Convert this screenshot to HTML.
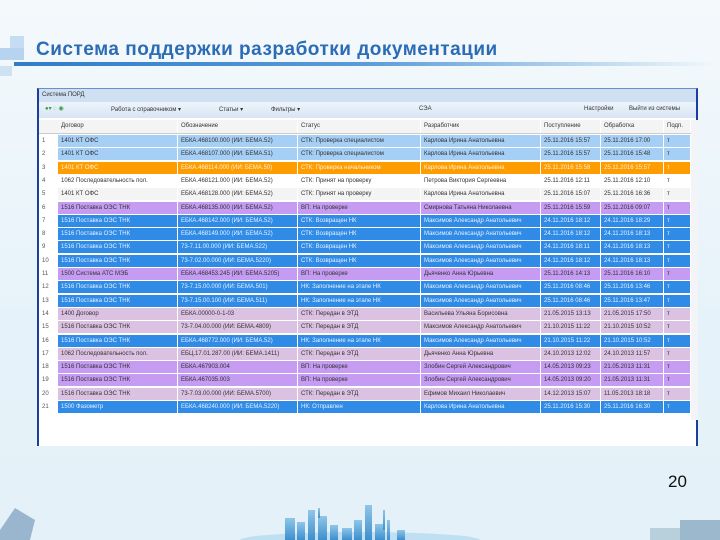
<!DOCTYPE html>
<html><head><meta charset="utf-8"><style>
*{margin:0;padding:0;box-sizing:border-box}
body{width:720px;height:540px;overflow:hidden;position:relative;background:linear-gradient(#f4f9fc,#e6f2f9 60%,#e4f1f8);font-family:"Liberation Sans",sans-serif}
.t{position:absolute;left:36px;top:39px;font-size:19px;font-weight:bold;color:#2b6cb5;letter-spacing:0.5px}
.line{position:absolute;left:14px;top:62px;width:700px;height:4px;background:linear-gradient(90deg,#2f7cc8,#5a9bd8 50%,rgba(200,225,245,0))}
.sq{position:absolute}
.win{position:absolute;left:37px;top:88px;width:661px;height:358px;background:#fff;border-left:2px solid #1b3f9c;border-right:2px solid #1b3f9c;border-top:1px solid #6b8fc8}
.tb{position:absolute;left:0;top:0;width:100%;height:13px;background:#cfe0f3;font-size:6px;color:#333;padding:3px 3px}
.tool{position:absolute;left:0;top:13px;width:100%;height:16px;background:linear-gradient(#eef4fb,#d7e5f4);font-size:6px;color:#333}
.hd{position:absolute;left:0;top:31px;width:652px;height:14px;background:#f4f4f4;border-bottom:1px solid #ccc;font-size:6px;color:#333}
.hd div,.r div{position:absolute;top:0;height:100%;white-space:nowrap;overflow:hidden;padding:3px 3px;border-right:1px solid #fff}
.r{position:absolute;left:0;width:652px;height:12px;font-size:6px;color:#333}
.r div:nth-child(1){left:0;width:17px;background:#fff!important;color:#555}
.r div:nth-child(2),.hd div:nth-child(1){left:19px;width:120px}
.r div:nth-child(3),.hd div:nth-child(2){left:139px;width:120px}
.r div:nth-child(4),.hd div:nth-child(3){left:259px;width:123px}
.r div:nth-child(5),.hd div:nth-child(4){left:382px;width:120px}
.r div:nth-child(6),.hd div:nth-child(5){left:502px;width:60px}
.r div:nth-child(7),.hd div:nth-child(6){left:562px;width:63px}
.r div:nth-child(8),.hd div:nth-child(7){left:625px;width:27px}
.lb div{background:#a6cff6}.or div{background:#ff9c00;color:#fff3e0}.w div{background:#fff}.g div{background:#f4f4f4}
.p div{background:#c59cf2}.b div{background:#2f8be6;color:#e6f0ff}.k div{background:#dcc2e2}
.sb{position:absolute;left:652px;top:31px;width:7px;height:300px;background:#f3f4f7}
.num{position:absolute;left:668px;top:472px;font-size:17px;color:#111}
</style></head><body>
<div class="sq" style="left:10px;top:36px;width:14px;height:12px;background:#c5dcf2"></div>
<div class="sq" style="left:0;top:48px;width:24px;height:12px;background:#b6d3ef"></div>
<div class="sq" style="left:0;top:66px;width:12px;height:10px;background:#cfe2f4"></div>
<div class="t">Система поддержки разработки документации</div>
<div class="line"></div>
<div class="win">
<div class="tb">Система ПОРД</div>
<div class="tool"><span style="position:absolute;left:6px;top:3px;color:#3a9a3a">●▾ ◌ ◉</span><span style="position:absolute;left:72px;top:4px">Работа с справочником ▾</span><span style="position:absolute;left:180px;top:4px">Статьи ▾</span><span style="position:absolute;left:232px;top:4px">Фильтры ▾</span><span style="position:absolute;left:380px;top:4px">СЭА</span><span style="position:absolute;left:545px;top:4px">Настройки</span><span style="position:absolute;left:590px;top:4px">Выйти из системы</span></div>
<div class="hd"><div>Договор</div><div>Обозначение</div><div>Статус</div><div>Разработчик</div><div>Поступление</div><div>Обработка</div><div>Подп.</div></div>
<div class="sb"></div>
<div class="r lb" style="top:46px"><div>1</div><div>1401 КТ ОФС</div><div>ЕБКА.468100.000 (ИИ: БЕМА.52)</div><div>СТК: Проверка специалистом</div><div>Карлова Ирина Анатольевна</div><div>25.11.2016 15:57</div><div>25.11.2016 17:00</div><div>т</div></div>
<div class="r lb" style="top:59px"><div>2</div><div>1401 КТ ОФС</div><div>ЕБКА.468107.000 (ИИ: БЕМА.51)</div><div>СТК: Проверка специалистом</div><div>Карлова Ирина Анатольевна</div><div>25.11.2016 15:57</div><div>25.11.2016 15:48</div><div>т</div></div>
<div class="r or" style="top:73px"><div>3</div><div>1401 КТ ОФС</div><div>ЕБКА.468114.000 (ИИ: БЕМА.50)</div><div>СТК: Проверка начальником</div><div>Карлова Ирина Анатольевна</div><div>25.11.2016 15:58</div><div>25.11.2016 15:57</div><div>т</div></div>
<div class="r w" style="top:86px"><div>4</div><div>1062 Последовательность пол.</div><div>ЕБКА.468121.000 (ИИ: БЕМА.52)</div><div>СТК: Принят на проверку</div><div>Петрова Виктория Сергеевна</div><div>25.11.2016 12:11</div><div>25.11.2016 12:10</div><div>т</div></div>
<div class="r g" style="top:99px"><div>5</div><div>1401 КТ ОФС</div><div>ЕБКА.468128.000 (ИИ: БЕМА.52)</div><div>СТК: Принят на проверку</div><div>Карлова Ирина Анатольевна</div><div>25.11.2016 15:07</div><div>25.11.2016 16:36</div><div>т</div></div>
<div class="r p" style="top:113px"><div>6</div><div>1516 Поставка ОЭС ТНК</div><div>ЕБКА.468135.000 (ИИ: БЕМА.52)</div><div>ВП: На проверке</div><div>Смирнова Татьяна Николаевна</div><div>25.11.2016 15:59</div><div>25.11.2016 09:07</div><div>т</div></div>
<div class="r b" style="top:126px"><div>7</div><div>1516 Поставка ОЭС ТНК</div><div>ЕБКА.468142.000 (ИИ: БЕМА.52)</div><div>СТК: Возвращен НК</div><div>Максимов Александр Анатольевич</div><div>24.11.2016 18:12</div><div>24.11.2016 18:29</div><div>т</div></div>
<div class="r b" style="top:139px"><div>8</div><div>1516 Поставка ОЭС ТНК</div><div>ЕБКА.468149.000 (ИИ: БЕМА.52)</div><div>СТК: Возвращен НК</div><div>Максимов Александр Анатольевич</div><div>24.11.2016 18:12</div><div>24.11.2016 18:13</div><div>т</div></div>
<div class="r b" style="top:152px"><div>9</div><div>1516 Поставка ОЭС ТНК</div><div>73-7.11.00.000 (ИИ: БЕМА.522)</div><div>СТК: Возвращен НК</div><div>Максимов Александр Анатольевич</div><div>24.11.2016 18:11</div><div>24.11.2016 18:13</div><div>т</div></div>
<div class="r b" style="top:166px"><div>10</div><div>1516 Поставка ОЭС ТНК</div><div>73-7.02.00.000 (ИИ: БЕМА.5220)</div><div>СТК: Возвращен НК</div><div>Максимов Александр Анатольевич</div><div>24.11.2016 18:12</div><div>24.11.2016 18:13</div><div>т</div></div>
<div class="r p" style="top:179px"><div>11</div><div>1500 Система АТС МЭБ</div><div>ЕБКА.468453.245 (ИИ: БЕМА.5205)</div><div>ВП: На проверке</div><div>Дьяченко Анна Юрьевна</div><div>25.11.2016 14:13</div><div>25.11.2016 16:10</div><div>т</div></div>
<div class="r b" style="top:192px"><div>12</div><div>1516 Поставка ОЭС ТНК</div><div>73-7.15.00.000 (ИИ: БЕМА.501)</div><div>НК: Заполнение на этапе НК</div><div>Максимов Александр Анатольевич</div><div>25.11.2016 08:46</div><div>25.11.2016 13:46</div><div>т</div></div>
<div class="r b" style="top:206px"><div>13</div><div>1516 Поставка ОЭС ТНК</div><div>73-7.15.00.100 (ИИ: БЕМА.511)</div><div>НК: Заполнение на этапе НК</div><div>Максимов Александр Анатольевич</div><div>25.11.2016 08:46</div><div>25.11.2016 13:47</div><div>т</div></div>
<div class="r k" style="top:219px"><div>14</div><div>1400 Договор</div><div>ЕБКА.00000-0-1-03</div><div>СТК: Передан в ЭТД</div><div>Васильева Ульяна Борисовна</div><div>21.05.2015 13:13</div><div>21.05.2015 17:50</div><div>т</div></div>
<div class="r k" style="top:232px"><div>15</div><div>1516 Поставка ОЭС ТНК</div><div>73-7.04.00.000 (ИИ: БЕМА.4809)</div><div>СТК: Передан в ЭТД</div><div>Максимов Александр Анатольевич</div><div>21.10.2015 11:22</div><div>21.10.2015 10:52</div><div>т</div></div>
<div class="r b" style="top:246px"><div>16</div><div>1516 Поставка ОЭС ТНК</div><div>ЕБКА.468772.000 (ИИ: БЕМА.52)</div><div>НК: Заполнение на этапе НК</div><div>Максимов Александр Анатольевич</div><div>21.10.2015 11:22</div><div>21.10.2015 10:52</div><div>т</div></div>
<div class="r k" style="top:259px"><div>17</div><div>1062 Последовательность пол.</div><div>ЕБЦ.17.01.287.00 (ИИ: БЕМА.1411)</div><div>СТК: Передан в ЭТД</div><div>Дьяченко Анна Юрьевна</div><div>24.10.2013 12:02</div><div>24.10.2013 11:57</div><div>т</div></div>
<div class="r p" style="top:272px"><div>18</div><div>1516 Поставка ОЭС ТНК</div><div>ЕБКА.467903.004</div><div>ВП: На проверке</div><div>Злобин Сергей Александрович</div><div>14.05.2013 09:23</div><div>21.05.2013 11:31</div><div>т</div></div>
<div class="r p" style="top:285px"><div>19</div><div>1516 Поставка ОЭС ТНК</div><div>ЕБКА.467035.003</div><div>ВП: На проверке</div><div>Злобин Сергей Александрович</div><div>14.05.2013 09:20</div><div>21.05.2013 11:31</div><div>т</div></div>
<div class="r k" style="top:299px"><div>20</div><div>1516 Поставка ОЭС ТНК</div><div>73-7.03.00.000 (ИИ: БЕМА.5700)</div><div>СТК: Передан в ЭТД</div><div>Ефимов Михаил Николаевич</div><div>14.12.2013 15:07</div><div>11.05.2013 18:18</div><div>т</div></div>
<div class="r b" style="top:312px"><div>21</div><div>1500 Фазометр</div><div>ЕБКА.468240.000 (ИИ: БЕМА.5220)</div><div>НК: Отправлен</div><div>Карлова Ирина Анатольевна</div><div>25.11.2016 15:30</div><div>25.11.2016 16:30</div><div>т</div></div>
</div>
<div class="num">20</div>
<svg style="position:absolute;left:0;top:500px" width="720" height="40">
<defs><linearGradient id="g" x1="0" x2="0" y1="0" y2="1"><stop offset="0" stop-color="#8fc6ea"/><stop offset="1" stop-color="#3d8fcc"/></linearGradient></defs>
<ellipse cx="360" cy="40" rx="120" ry="8" fill="#bfe0f3"/>
<g fill="url(#g)"><rect x="285" y="18" width="10" height="22"/><rect x="297" y="22" width="8" height="18"/><rect x="308" y="10" width="7" height="30"/><rect x="318" y="16" width="9" height="24"/><rect x="330" y="25" width="8" height="15"/><rect x="342" y="28" width="10" height="12"/><rect x="354" y="20" width="8" height="20"/><rect x="365" y="5" width="7" height="35"/><rect x="375" y="24" width="10" height="16"/><rect x="387" y="20" width="3" height="20"/><rect x="397" y="30" width="8" height="10"/><rect x="318" y="8" width="2" height="10"/><rect x="383" y="10" width="2" height="20"/></g>
<polygon points="0,30 15,8 35,20 30,40 0,40" fill="#9ab6cf"/>
<rect x="680" y="20" width="40" height="20" fill="#9bb8cc"/>
<rect x="650" y="28" width="30" height="12" fill="#b8cfdc"/>
</svg>
</body></html>
